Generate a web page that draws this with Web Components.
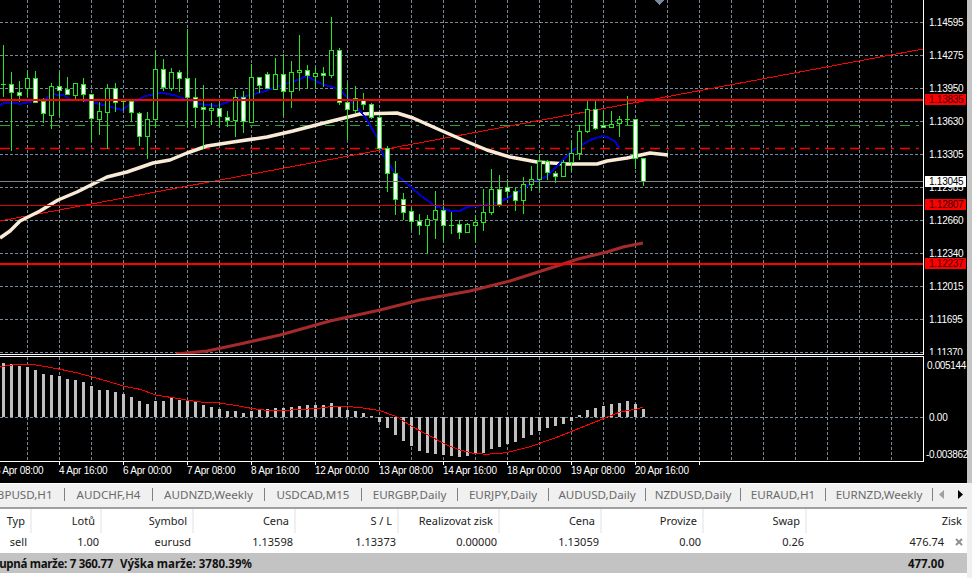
<!DOCTYPE html>
<html>
<head>
<meta charset="utf-8">
<title>Terminal</title>
<style>
  html, body { margin: 0; height: 100%; overflow: hidden; background: #f0f0f0; }
  body { display: flex; flex-direction: column; width: 972px; height: 578px; font-family: "Noto Sans", sans-serif; }
</style>
</head>
<body>
<mt-chart></mt-chart>
<mt-tabs>
  <mt-tab width="88" style="margin-left:-23px">GBPUSD,H1</mt-tab>
  <mt-tab width="88">AUDCHF,H4</mt-tab>
  <mt-tab width="112">AUDNZD,Weekly</mt-tab>
  <mt-tab width="97">USDCAD,M15</mt-tab>
  <mt-tab width="96">EURGBP,Daily</mt-tab>
  <mt-tab width="91">EURJPY,Daily</mt-tab>
  <mt-tab width="97">AUDUSD,Daily</mt-tab>
  <mt-tab width="95">NZDUSD,Daily</mt-tab>
  <mt-tab width="85">EURAUD,H1</mt-tab>
  <mt-tab width="107">EURNZD,Weekly</mt-tab>
</mt-tabs>
<mt-orders>
  <mt-row head>
    <span>Typ</span><span>Lotů</span><span>Symbol</span><span>Cena</span><span>S / L</span>
    <span>Realizovat zisk</span><span>Cena</span><span>Provize</span><span>Swap</span><span>Zisk</span>
  </mt-row>
  <mt-row>
    <span>sell</span><span>1.00</span><span>eurusd</span><span>1.13598</span><span>1.13373</span>
    <span>0.00000</span><span>1.13059</span><span>0.00</span><span>0.26</span><span>476.74</span>
  </mt-row>
  <mt-summary total="477.00"><span>Dostupná marže: 7 360.77</span><span>Výška marže: 3780.39%</span></mt-summary>
</mt-orders>

<script>
// candles: wick top, wick bottom, body top, body bottom, filled. Values read at 3x
const CANDLES_A = [
  [135,290,253,254,2],[216,452,253,277,1],[243,305,277,284,1],[213,292,235,263,0],[213,305,235,305,1],
  [295,370,304,340,1],[250,386,259,344,0],[215,347,259,269,1],[232,285,268,283,1],[250,300,250,284,0],
  [235,305,253,283,1],[283,425,283,355,1],[306,404,334,356,0],[252,448,265,335,0],[250,335,265,305,1],
  [297,330,298,304,1],[300,362,304,337,1],[335,437,340,409,1],[337,478,358,409,0],[153,383,208,358,0],
  [178,272,208,260,1],[205,272,217,265,0],[211,275,217,235,1],[87,380,235,292,1],[235,383,292,322,1],
  [255,448,322,328,1],[310,376,325,331,0],[310,380,325,349,1],[333,380,352,361,1],[270,410,292,361,0],
  [273,400,292,364,1],[192,368,232,367,0],[230,280,232,254,1],[215,268,223,265,1],[175,268,223,268,0],
  [163,347,223,274,1],[183,323,217,274,0],[105,272,211,217,0],[195,268,211,226,1],[200,268,220,229,0],
  [200,262,220,226,1],[52,233,151,226,0],[145,316,151,307,1],
];
// same, second crop, 80px lower
const CANDLES_B = [
  [10,180,67,88,1],[18,100,55,90,0],[40,90,58,73,1],[70,118,73,112,1],[112,210,112,205,1],
  [198,335,205,280,1],[243,405,280,358,1],[340,420,358,397,1],[385,450,394,424,1],[403,465,424,436,1],
  [405,523,418,436,0],[333,476,391,418,0],[368,485,391,436,1],[395,462,434,435,2],[420,476,433,457,1],
  [430,460,433,457,0],[406,488,427,436,0],[328,452,397,427,0],[267,406,328,397,0],[286,380,328,373,1],
  [298,355,322,334,1],[325,392,334,361,1],[290,402,313,361,0],[258,333,298,313,0],[222,330,244,298,0],
  [240,300,244,277,1],[273,310,280,289,1],[240,292,247,289,0],[183,275,220,247,0],[135,240,154,220,0],
  [60,158,88,154,0],[63,150,88,145,1],[92,143,136,142,1],[93,145,133,142,0],[108,170,118,130,0],
  [48,135,118,119,2],[118,268,118,235,1],[235,317,235,304,1],
];
const MACD_TOPS = [
  40,42,47,50,60,72,75,78,87,90,96,108,120,120,125,132,141,153,162,153,152,145,149,152,156,165,171,176,183,183,
  189,183,180,178,174,174,171,168,165,165,165,158,170,180,183,189,198,216,234,255,273,288,303,309,312,315,318,320,
  318,312,309,297,291,282,276,264,255,243,234,228,222,213,195,180,174,168,162,159,153,162,176,
];
const CREAM = [[0,238],[10,231],[20,221],[30,216],[40,211],[58,200],[77,192],[107,177],[127,172],[153,163],[170,160],[187,153],[207,146],[233,142],[267,137],[293,131],[320,124],[340,119],[360,114],[397,113],[413,118],[440,130],[463,140],[487,150],[510,157],[537,162],[567,164],[597,164],[607,161],[627,158],[650,153],[668,155]];
const BROWN = [[176,354],[207,351],[240,344],[280,335],[330,321],[380,310],[420,300],[470,291],[510,281],[560,265],[578,259],[607,252],[623,247],[643,243]];
const BLUE_A = [[0,316],[15,308],[45,308],[60,312],[90,305],[130,300],[160,283],[190,285],[215,300],[260,302],[330,320],[365,330],[395,310],[430,290],[480,278],[520,285],[550,295],[600,312],[650,318],[700,300],[750,285],[790,275],[830,260],[880,245],[920,228],[960,250],[1000,262],[1020,270]];
const BLUE_B = [[5,35],[30,60],[75,110],[110,170],[130,225],[165,280],[200,310],[240,345],[285,378],[330,392],[360,392],[385,380],[430,375],[470,370],[510,350],[545,330],[580,305],[620,290],[665,245],[700,210],[750,180],[790,167],[820,180],[838,203]];
const SIGNAL_A = [[0,50],[50,43],[95,43],[140,50],[180,58],[230,68],[280,82],[320,93],[370,108],[420,118],[470,136],[520,143],[570,152],[610,157],[650,158],[700,165],[760,176],[800,181],[860,181],[900,178],[950,176],[990,170]];
const SIGNAL_B = [[0,170],[60,170],[100,174],[150,182],[200,200],[250,232],[300,258],[350,285],[390,300],[430,310],[470,313],[530,308],[600,290],[680,262],[760,230],[830,202],[870,186],[920,177],[938,172]];

const PRICES = [[22,"1.14595"],[55,"1.14275"],[88,"1.13950"],[121,"1.13630"],[154,"1.13305"],[187,"1.12985"],[220,"1.12660"],[253,"1.12340"],[286,"1.12015"],[319,"1.11695"],[352,"1.11370"]];
const TIMES = ["3 Apr 08:00","4 Apr 16:00","6 Apr 00:00","7 Apr 08:00","8 Apr 16:00","12 Apr 00:00","13 Apr 08:00","14 Apr 16:00","18 Apr 00:00","19 Apr 08:00","20 Apr 16:00"];

const pts = (list) => list.map((p) => p.join(",")).join(" ");
const zoomed = (list, dx, dy) => list.map(([x, y]) => [+(dx + x / 3).toFixed(1), +(dy + y / 3).toFixed(1)]);

class MtChart extends HTMLElement {
  constructor() {
    super();
    this.attachShadow({ mode: "open" });
  }

  connectedCallback() {
    this.shadowRoot.innerHTML = `
      <style>
        :host { display: block; flex: none; width: 972px; height: 485px; background: #c4c4c4; }
        svg { display: block; }
        text { font: 10px "Liberation Sans", sans-serif; fill: #fff; letter-spacing: -0.25px; }
        text.dark { fill: #300; }
        text.ink { fill: #000; }
        .grid { stroke: #778899; stroke-width: 1; stroke-dasharray: 3 2; }
        .crisp { shape-rendering: crispEdges; }
      </style>
      <svg width="972" height="485" viewBox="0 0 972 485">
        <rect width="967" height="483" fill="#000"/>
        <g class="crisp">${this.grid()}</g>
        <path class="crisp" d="M655 0h9l-4.5 5z" fill="#778899"/>
        <g fill="none">
          <line class="crisp" x1="0" y1="125.5" x2="923" y2="125.5" stroke="#2fa32f" stroke-dasharray="10 6 3 6"/>
          <line x1="0" y1="148.5" x2="923" y2="148.5" stroke="#f00" stroke-width="1.5" stroke-dasharray="10 6 3 6"/>
          <line class="crisp" x1="0" y1="221" x2="923" y2="49" stroke="#f00"/>
          <polyline points="${pts(BROWN)}" stroke="#a52a2a" stroke-width="3" stroke-linejoin="round"/>
          <polyline points="${pts(CREAM)}" stroke="#faebd7" stroke-width="3.5" stroke-linejoin="round"/>
          <polyline class="crisp" points="${pts(zoomed(BLUE_A, 0, 0))}" stroke="#0000cd" stroke-width="2"/>
          <polyline class="crisp" points="${pts(zoomed(BLUE_B, 340, 80))}" stroke="#0000cd" stroke-width="2"/>
        </g>
        <g class="crisp">${this.candles()}</g>
        <g class="crisp" fill="none">
          <line x1="0" y1="99.5" x2="923" y2="99.5" stroke="#f00" stroke-width="2"/>
          <line x1="0" y1="181.5" x2="923" y2="181.5" stroke="#808080"/>
          <line x1="0" y1="205.5" x2="923" y2="205.5" stroke="#e00000"/>
          <line x1="0" y1="264" x2="923" y2="264" stroke="#f00" stroke-width="2"/>
        </g>
        ${PRICES.map(([y, t]) => `<text x="929" y="${y + 4}">${t}</text>`).join("")}
        ${this.tag(94, "#f00", "dark", "1.13835")}
        ${this.tag(176, "#fff", "ink", "1.13045")}
        ${this.tag(199, "#f00", "dark", "1.12807")}
        ${this.tag(258, "#f00", "dark", "1.12237")}
        <rect x="0" y="355" width="967" height="1" fill="#000"/>
        <rect x="0" y="357" width="923" height="104" fill="#000"/>
        <g class="crisp">${this.subGrid()}</g>
        <g class="crisp">${this.macd()}</g>
        <g class="crisp" fill="none">
          <polyline points="${pts(zoomed(SIGNAL_A, 0, 350))}" stroke="#f00"/>
          <polyline points="${pts(zoomed(SIGNAL_B, 330, 350))}" stroke="#f00"/>
        </g>
        <text x="927" y="369" style="letter-spacing:-.35px">0.005144</text>
        <text x="929" y="421">0.00</text>
        <text x="926" y="458" style="letter-spacing:-.35px">-0.003862</text>
        <g class="crisp" fill="#fff">
          <rect x="923" y="0" width="1" height="355"/>
          <rect x="0" y="354" width="923" height="1"/>
          <rect x="0" y="356" width="924" height="1"/>
          <rect x="923" y="356" width="1" height="106"/>
          <rect x="0" y="461" width="924" height="1"/>
          ${TIMES.map((t, i) => `<rect x="${59 + 64 * i}" y="462" width="1" height="3"/>`).join("")}
        </g>
        ${TIMES.map((t, i) => `<text x="${i ? 59 + 64 * (i - 1) : -5}" y="474">${t}</text>`).join("")}
        <rect x="0" y="483" width="972" height="2" fill="#f0f0f0"/>
        <rect x="0" y="483" width="967" height="1" fill="#fff"/>
      </svg>`;
  }

  grid() {
    let out = "";
    for (let y = 22; y <= 352; y += 33) {
      out += `<line class="grid" x1="0" y1="${y + 0.5}" x2="923" y2="${y + 0.5}"/>`;
    }
    for (let x = 27; x < 923; x += 32) {
      out += `<line class="grid" x1="${x + 0.5}" y1="0" x2="${x + 0.5}" y2="354"/>`;
    }
    return out;
  }

  subGrid() {
    let out = `<line class="grid" x1="0" y1="417.5" x2="923" y2="417.5"/>`;
    for (let x = 27; x < 923; x += 32) {
      out += `<line class="grid" x1="${x + 0.5}" y1="357" x2="${x + 0.5}" y2="461"/>`;
    }
    return out;
  }

  candles() {
    const rows = [
      ...CANDLES_A.map((c) => c.map((v, k) => (k < 4 ? Math.round(v / 3) : v))),
      ...CANDLES_B.map((c) => c.map((v, k) => (k < 4 ? Math.round(80 + v / 3) : v))),
    ];
    return rows
      .map(([wt, wb, bt, bb, kind], i) => {
        const x = 8 * i + 1;
        const wick = `<rect x="${x + 2}" y="${wt}" width="1" height="${wb - wt}" fill="#22e622"/>`;
        if (kind === 2) return wick + `<rect x="${x}" y="${bt}" width="5" height="1" fill="#22e622"/>`;
        return (
          wick +
          `<rect x="${x + 0.5}" y="${bt + 0.5}" width="4" height="${bb - bt}" fill="${kind ? "#fff" : "#000"}" stroke="#22e622"/>`
        );
      })
      .join("");
  }

  macd() {
    return MACD_TOPS.map((v, i) => {
      const x = 8 * i + 2;
      const y = Math.round(350 + v / 3);
      const top = Math.min(y, 417);
      return `<rect x="${x}" y="${top}" width="3" height="${Math.abs(417 - y) || 1}" fill="#c0c0c0"/>`;
    }).join("");
  }

  tag(y, fill, cls, label) {
    return `<rect x="925" y="${y}" width="41" height="11" fill="${fill}"/><text class="${cls}" x="929" y="${y + 9}">${label}</text>`;
  }
}

class MtTabs extends HTMLElement {
  constructor() {
    super();
    this.attachShadow({ mode: "open" });
  }

  connectedCallback() {
    this.shadowRoot.innerHTML = `
      <style>
        :host { display: flex; flex: none; height: 22px; background: #f0f0f0; overflow: hidden; }
        .list { display: flex; flex: none; width: 933px; overflow: hidden; }
        .arrows { flex: 1; display: flex; align-items: center; gap: 14px; padding: 0 0 4px 6px; }
      </style>
      <div class="list"><slot></slot></div>
      <div class="arrows">
        <svg width="5" height="9"><path d="M5 0v9L0 4.5z" fill="#a0a0a0"/></svg>
        <svg width="5" height="9"><path d="M0 0v9l5-4.5z" fill="#000"/></svg>
      </div>`;
  }
}

class MtTab extends HTMLElement {
  constructor() {
    super();
    this.attachShadow({ mode: "open" });
  }

  connectedCallback() {
    this.shadowRoot.innerHTML = `
      <style>
        :host { display: flex; flex: none; align-items: center; justify-content: center; width: ${this.getAttribute("width")}px; padding: 0 1px 4px 0; height: 22px;
          box-sizing: border-box; position: relative;
          font: 11.6px "Noto Sans", sans-serif; color: #6a6a6a; white-space: nowrap; }
        :host::after { content: ""; position: absolute; right: 0; top: 3px; height: 13px; width: 1px; background: #808080; }
      </style>
      <slot></slot>`;
  }
}

class MtOrders extends HTMLElement {
  constructor() {
    super();
    this.attachShadow({ mode: "open" });
  }

  connectedCallback() {
    this.shadowRoot.innerHTML = `
      <style>
        :host { display: block; flex: 1; width: 967px; background: #fff; border-top: 2px solid #a0a0a0; overflow: hidden;
          font: 11px "Noto Sans", sans-serif; color: #222; }
      </style>
      <slot></slot>`;
  }
}

class MtRow extends HTMLElement {
  constructor() {
    super();
    this.attachShadow({ mode: "open" });
  }

  connectedCallback() {
    const head = this.hasAttribute("head");
    this.shadowRoot.innerHTML = `
      <style>
        :host { display: grid; position: relative; height: 22px; align-items: center;
          grid-template-columns: 32px 70px 92px 102px 103px 101px 102px 102px 103px 1fr; }
        ::slotted(span) { text-align: right; padding-right: ${head ? 5 : 3}px; line-height: ${head ? 24 : 22}px; ${head ? "border-right: 2px solid #f0f0f0;" : ""} }
        ::slotted(span:first-child) { padding-right: 5px; }
        ::slotted(span:last-child) { border-right: 0; padding-right: ${head ? 5 : 23}px; }
        .close { position: absolute; right: 4px; top: 7px; display: ${head ? "none" : "block"}; }
      </style>
      <slot></slot>
      <svg class="close" width="8" height="8"><path d="M1 1l6 6M7 1l-6 6" stroke="#909090" stroke-width="2"/></svg>`;
  }
}

class MtSummary extends HTMLElement {
  constructor() {
    super();
    this.attachShadow({ mode: "open" });
  }

  connectedCallback() {
    this.shadowRoot.innerHTML = `
      <style>
        :host { display: flex; align-items: center; justify-content: space-between; height: 20px; background: #c3c3c3;
          font-size: 11.5px; font-weight: 700; color: #111; overflow: hidden; white-space: nowrap; }
        .info { margin-left: -26px; }
        ::slotted(span:first-child) { letter-spacing: -.3px; margin-right: 7px; }
        .total { padding-right: 23px; }
      </style>
      <span class="info"><slot></slot></span>
      <span class="total">${this.getAttribute("total")}</span>`;
  }
}

customElements.define("mt-chart", MtChart);
customElements.define("mt-tabs", MtTabs);
customElements.define("mt-tab", MtTab);
customElements.define("mt-orders", MtOrders);
customElements.define("mt-row", MtRow);
customElements.define("mt-summary", MtSummary);
</script>
</body>
</html>
